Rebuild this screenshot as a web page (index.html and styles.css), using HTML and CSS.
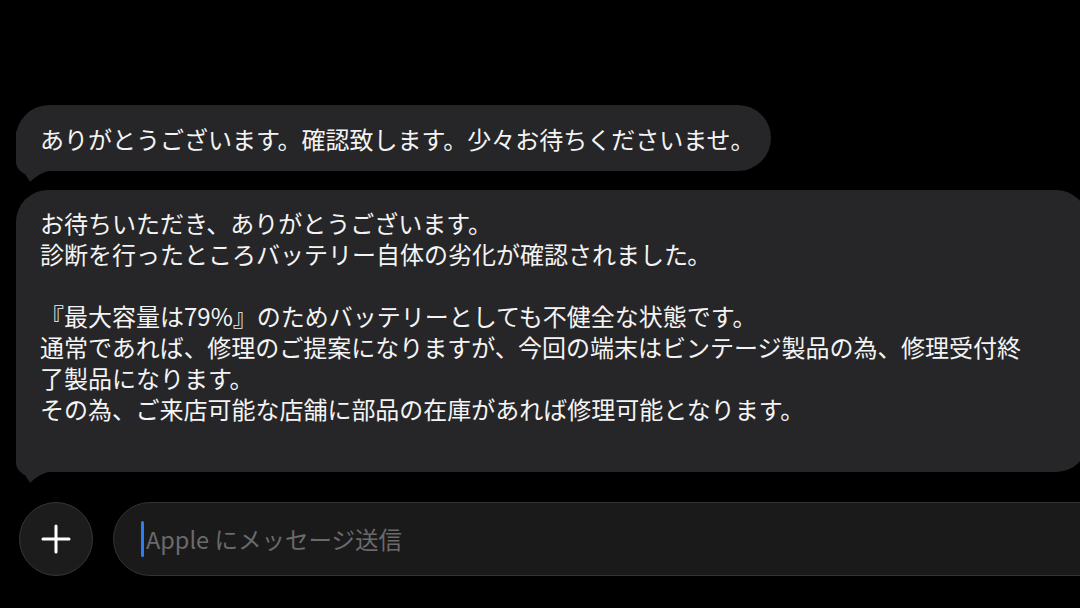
FILE: index.html
```html
<!DOCTYPE html>
<html lang="ja">
<head>
    <meta charset="UTF-8">
    <meta name="viewport" content="width=device-width, initial-scale=1.0">
    <title>Apple メッセージ</title>
    <link rel="stylesheet" href="styles.css">
</head>
<body>
    <div class="screen">
        <div class="thread">
            <div class="bubble">
                ありがとうございます。確認致します。少々お待ちくださいませ。
                <svg class="tail" viewBox="0 -40 32 53"><path d="M0 -40 L0 -9 C0 -3 6 2 9 3 C11 6 13 9 14 11 C17 8 24 2 32 0 L32 -40 Z"/></svg>
            </div>
            <div class="bubble long">
                お待ちいただき、ありがとうございます。<br>
                診断を行ったところバッテリー自体の劣化が確認されました 。<br>
                <br>
                『最大容量は79%』のためバッテリーとしても不健全な状態です。<br>
                通常であれば、 修理のご提案になりますが、 今回の端末はビンテージ製品の為、 修理受付終<br>
                了製品になります。<br>
                その為、 ご来店可能な店舗に部品の在庫があれば修理可能となります。
                <svg class="tail" viewBox="0 -40 32 53"><path d="M0 -40 L0 -9 C0 -3 6 2 9 3 C11 6 13 9 14 11 C17 8 24 2 32 0 L32 -40 Z"/></svg>
            </div>
        </div>
        <div class="composer">
            <button class="add" type="button">
                <svg viewBox="0 0 30 30"><path d="M15 2 V28 M2 15 H28"/></svg>
            </button>
            <div class="field">
                <span class="caret"></span>
                <span class="placeholder">Apple にメッセージ送信</span>
            </div>
        </div>
    </div>
</body>
</html>
```

FILE: styles.css
```css
body {
    margin: 0;
    background: #000;
    overflow: hidden;
    font-family: "Noto Sans CJK JP", "Noto Sans", sans-serif;
}
.screen {
    height: 608px;
    padding-top: 105px;
    box-sizing: border-box;
}
.thread {
    display: flex;
    flex-direction: column;
    align-items: flex-start;
    gap: 19px;
    padding-left: 16px;
}
.bubble {
    position: relative;
    isolation: isolate;
    background: #262628;
    color: #f4f4f4;
    font-size: 24px;
    line-height: 31px;
    word-spacing: -6px;
    white-space: nowrap;
    border-radius: 33px;
    padding: 17.5px 17px 17.5px 24px;
}
.bubble.long {
    width: 1072px;
    box-sizing: border-box;
    padding: 16.5px 24px 48.5px;
    border-radius: 32px;
}
.tail {
    position: absolute;
    z-index: -1;
    left: 0;
    bottom: -13px;
    width: 32px;
    height: 53px;
    fill: #262628;
}
.composer {
    display: flex;
    align-items: center;
    gap: 20px;
    margin-top: 30px;
    margin-right: -60px;
    padding-left: 19px;
}
.add {
    flex: none;
    width: 74px;
    height: 74px;
    padding: 0;
    border-radius: 50%;
    background: #1c1c1d;
    border: 1px solid #363638;
    display: flex;
    align-items: center;
    justify-content: center;
}
.add svg {
    width: 30px;
    height: 30px;
    stroke: #fff;
    stroke-width: 3;
    stroke-linecap: round;
    fill: none;
}
.field {
    flex: 1;
    height: 74px;
    box-sizing: border-box;
    border-radius: 37px;
    background: #1a1a1b;
    border: 1px solid #333335;
    display: flex;
    align-items: center;
    padding-left: 27px;
}
.caret {
    width: 3px;
    height: 36px;
    background: #2f7df6;
    border-radius: 2px;
}
.placeholder {
    margin-left: 2px;
    color: #6a6a6c;
    font-size: 23.5px;
}
```
